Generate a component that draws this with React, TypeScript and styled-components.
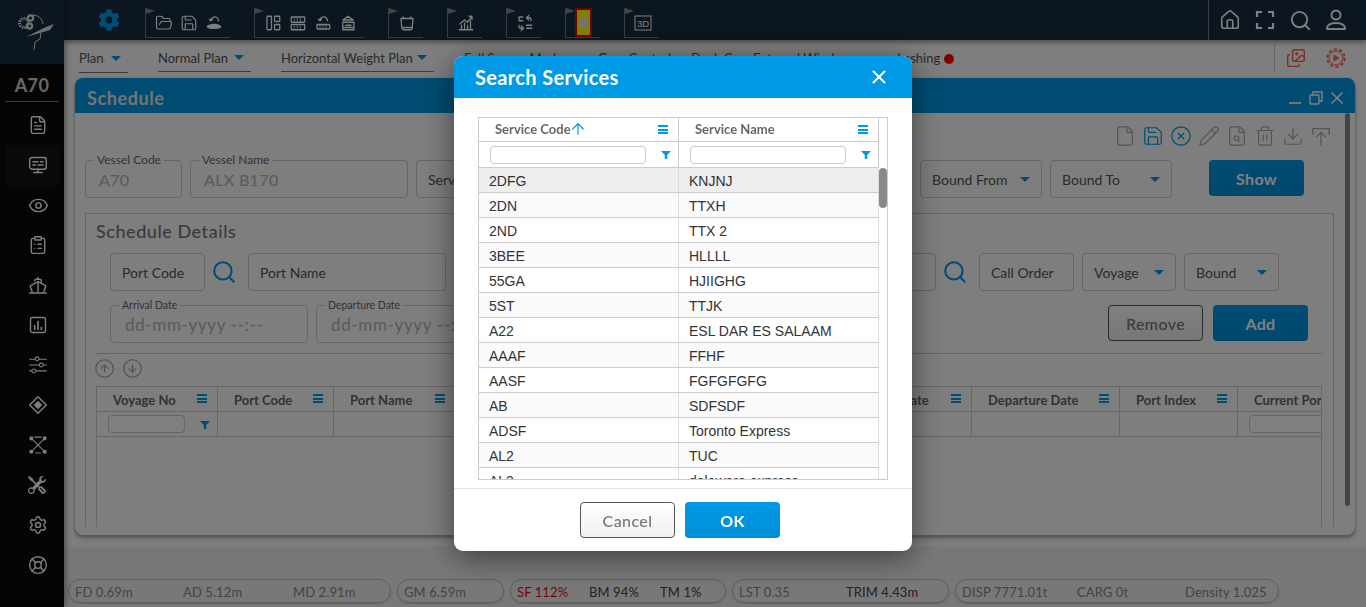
import React from 'react';
import styled, { createGlobalStyle } from 'styled-components';
import {
  FolderOpen,
  Save,
  House,
  Search,
  File,
  CircleX,
  Pencil,
  FileSearch,
  Trash2,
  Download,
  FileText,
  Eye,
  ClipboardList,
  Settings,
  LifeBuoy,
  Images,
  X,
  CircleArrowUp,
  CircleArrowDown,
  ArrowUp,
} from 'lucide-react';
import { FaCog } from 'react-icons/fa';
import { BsTools } from 'react-icons/bs';

const BLUE = '#0099e6';
const UI_FONT = '"Lato", "Noto Sans", sans-serif';

const GlobalStyle = createGlobalStyle`
  html, body {
    margin: 0;
    padding: 0;
    height: 100%;
    overflow: hidden;
    font-family: ${UI_FONT};
  }
  * { box-sizing: border-box; }
`;

const Shell = styled.div`
  display: grid;
  grid-template-columns: 64px 1fr;
  width: 1366px;
  height: 607px;
  overflow: hidden;
  background: #fcfcfc;
`;

/* ---------- sidebar ---------- */

const Sidebar = styled.aside`
  display: flex;
  flex-direction: column;
  background: #0a0a0a;
  box-shadow: 2px 0 5px rgba(0, 0, 0, 0.35);
  position: relative;
  z-index: 3;
`;

const LogoBox = styled.div`
  height: 64px;
  background: #162c42;
  display: flex;
  align-items: center;
  justify-content: center;
`;

const VesselTag = styled.div`
  height: 38px;
  margin: 0 5px;
  padding-top: 5px;
  border-bottom: 1px solid #777;
  display: flex;
  align-items: center;
  justify-content: center;
  color: #d0d0d0;
  font-size: 18px;
  font-weight: 700;
  letter-spacing: 0.4px;
`;

const NavList = styled.nav`
  display: flex;
  flex-direction: column;
  margin-top: 3px;
`;

const NavItem = styled.div<{ $active?: boolean }>`
  height: 40px;
  margin-left: 5px;
  width: 55px;
  padding-left: 23px;
  display: flex;
  align-items: center;
  color: #fff;
  background: ${p => (p.$active ? '#141414' : 'transparent')};
`;

/* ---------- top bar ---------- */

const Workspace = styled.div`
  display: flex;
  flex-direction: column;
  min-width: 0;
`;

const TopBar = styled.header`
  height: 40px;
  flex: none;
  background: #162c42;
  display: flex;
  align-items: center;
  padding-left: 34px;
  color: #fff;
  box-shadow: 0 2px 5px rgba(0, 0, 0, 0.45);
  position: relative;
  z-index: 2;
`;

const GearButton = styled.div`
  display: flex;
  color: ${BLUE};
  margin-right: 25px;
`;

const ToolGroups = styled.div`
  display: flex;
  gap: 24px;
`;

const ToolGroup = styled.div<{ $width: number }>`
  position: relative;
  width: ${p => p.$width}px;
  height: 30px;
  margin-top: 5px;
  padding: 6px 0 0 9px;
  border-left: 1px solid #777;
  border-bottom: 1px solid #777;
  display: flex;
  gap: 7px;
  &::before {
    content: '';
    position: absolute;
    top: 0;
    left: 0;
    border-left: 9px solid #888;
    border-top: 3px solid transparent;
    border-bottom: 3px solid transparent;
  }
`;

const Highlighted = styled.div`
  position: absolute;
  left: 9px;
  top: 0;
  width: 17px;
  height: 29px;
  background: #ff0;
  border: 2px solid #e00000;
  display: flex;
  align-items: center;
  justify-content: center;
  color: #e8e8e8;
`;

const TopRight = styled.div`
  margin-left: auto;
  height: 40px;
  display: flex;
  align-items: center;
  gap: 12px;
  padding: 0 18px 0 10px;
  border-left: 1px solid #777;
`;

/* ---------- sub bar ---------- */

const SubBar = styled.div`
  height: 33px;
  flex: none;
  display: flex;
  align-items: flex-start;
  padding: 8px 0 0 15px;
  gap: 30px;
  font-size: 13px;
  color: #555;
`;

const ModeDrop = styled.div<{ $width: number; $low?: boolean }>`
  width: ${p => p.$width}px;
  display: flex;
  align-items: center;
  justify-content: space-between;
  height: ${p => (p.$low ? 25 : 24)}px;
  padding: 0 7px 4px 0;
  border-bottom: 1px solid #777;
  white-space: nowrap;
`;

const Caret = styled.i`
  display: inline-block;
  flex: none;
  border-left: 5px solid transparent;
  border-right: 5px solid transparent;
  border-top: 5px solid ${BLUE};
`;

const ModeLinks = styled.div`
  display: flex;
`;

const ModeLink = styled.span<{ $width: number }>`
  width: ${p => p.$width}px;
  white-space: nowrap;
  line-height: 20px;
`;

const RedDot = styled.i`
  display: inline-block;
  width: 10px;
  height: 10px;
  margin: 0 0 -1px 4px;
  border-radius: 50%;
  background: #ff0000;
`;

const SubRight = styled.div`
  margin: -4px 0 0 auto;
  height: 28px;
  width: 92px;
  display: flex;
  align-items: center;
  gap: 19px;
  padding-left: 11px;
  border-left: 1px solid #ccc;
  color: #ff5a4a;
`;

/* ---------- schedule panel ---------- */

const Panel = styled.section`
  flex: none;
  height: 457px;
  margin: 5px 11px 12px;
  border-radius: 8px;
  background: #fcfcfc;
  box-shadow: 0 2px 0 #b5b5b5, 0 3px 4px rgba(0, 0, 0, 0.3), 0 0 2px rgba(0, 0, 0, 0.25);
  overflow: hidden;
  display: flex;
  flex-direction: column;
`;

const PanelHead = styled.div`
  height: 35px;
  flex: none;
  background: ${BLUE};
  color: #e8e8e8;
  font-size: 18px;
  font-weight: 700;
  letter-spacing: 0.6px;
  display: flex;
  align-items: center;
  padding: 4px 8px 0 12px;
`;

const WindowButtons = styled.div`
  margin-left: auto;
  display: flex;
  align-items: center;
  gap: 4px;
  color: #fff;
`;

const MinimizeBar = styled.i`
  width: 12px;
  height: 2px;
  margin: 10px 4px 0 0;
  background: #e8e8e8;
`;

const PanelBody = styled.div`
  position: relative;
  height: 414px;
  overflow: hidden;
  padding: 12px 21px 0 10px;
`;

const ScrollThumb = styled.div`
  position: absolute;
  top: 0;
  right: 5px;
  width: 5px;
  height: 393px;
  border-radius: 3px;
  background: #888;
`;

const ActionIcons = styled.div`
  height: 22px;
  display: flex;
  justify-content: flex-end;
  gap: 6px;
  padding-right: 2px;
`;

const ActionIcon = styled.span<{ $blue?: boolean }>`
  display: flex;
  color: ${p => (p.$blue ? BLUE : '#aaa')};
`;

const FieldRow = styled.div<{ $top: number; $indent?: number; $right?: number }>`
  display: flex;
  align-items: flex-start;
  gap: 8px;
  margin-top: ${p => p.$top}px;
  padding-left: ${p => p.$indent ?? 0}px;
  padding-right: ${p => p.$right ?? 0}px;
`;

const Field = styled.div<{ $width?: number; $grow?: boolean; $muted?: boolean }>`
  position: relative;
  flex: ${p => (p.$grow ? '1' : 'none')};
  width: ${p => (p.$width ? `${p.$width}px` : 'auto')};
  height: 38px;
  border: 1px solid #ccc;
  border-radius: 4px;
  padding: 0 ${p => (p.$muted ? 13 : 11)}px;
  display: flex;
  align-items: center;
  justify-content: space-between;
  white-space: nowrap;
  font-size: ${p => (p.$muted ? 16 : 14)}px;
  letter-spacing: ${p => (p.$muted ? 0.35 : 0)}px;
  color: ${p => (p.$muted ? '#b4b4b4' : '#555')};
`;

const DateValue = styled.span`
  margin-left: 1px;
  font-size: 17px;
  letter-spacing: 0.65px;
`;

const FloatLabel = styled.span<{ $small?: boolean }>`
  position: absolute;
  top: -8px;
  left: 8px;
  padding: 0 3px;
  background: #fcfcfc;
  line-height: 14px;
  font-size: ${p => (p.$small ? 10.5 : 12)}px;
  letter-spacing: 0;
  color: #666;
`;

const PrimaryButton = styled.button<{ $gap?: number }>`
  flex: none;
  width: 95px;
  height: 36px;
  margin-left: ${p => p.$gap ?? 0}px;
  border: 0;
  border-radius: 4px;
  background: linear-gradient(${BLUE}, #008fd8);
  color: #fff;
  font-family: inherit;
  font-size: 16px;
  font-weight: 700;
  letter-spacing: 0.3px;
`;

const OutlineButton = styled.button<{ $push?: boolean }>`
  flex: none;
  width: 95px;
  height: 36px;
  margin: ${p => (p.$push ? '0 2px 0 auto' : '0')};
  border: 1px solid #555;
  border-radius: 4px;
  background: linear-gradient(#fff, #f0f0f0);
  color: #777;
  font-family: inherit;
  font-size: 16px;
  font-weight: 500;
  letter-spacing: 0.4px;
`;

const Details = styled.div`
  margin-top: 15px;
  border: 1px solid #ccc;
  border-bottom: 0;
  padding: 6px 10px 0;
  height: 320px;
`;

const DetailsTitle = styled.h3`
  margin: 0;
  height: 23px;
  font-size: 18px;
  line-height: 22px;
  font-weight: 500;
  letter-spacing: 0.55px;
  color: #777;
`;

const SearchGlyph = styled.span`
  flex: none;
  width: 27px;
  margin: 0 3px 0 -3px;
  height: 38px;
  display: flex;
  align-items: center;
  justify-content: center;
  color: ${BLUE};
`;

const Divider = styled.hr`
  margin: 10px 0 0;
  border: 0;
  border-top: 1px solid #ccc;
`;

const OrderButtons = styled.div`
  display: flex;
  gap: 7px;
  height: 32px;
  padding-top: 4px;
  margin-left: -2px;
  color: #999;
`;

const DataTable = styled.div`
  width: 1226px;
  height: 141px;
  overflow: hidden;
  border: 1px solid #ccc;
  border-bottom: 0;
`;

const TableRow = styled.div`
  display: flex;
  height: 25px;
  border-bottom: 1px solid #ccc;
`;

const HeadCell = styled.div<{ $width: number }>`
  flex: none;
  position: relative;
  width: ${p => p.$width}px;
  display: flex;
  align-items: center;
  padding: 1px 0 0 16px;
  border-right: 1px solid #ccc;
  font-size: 13px;
  font-weight: 700;
  color: #666;
  white-space: nowrap;
  overflow: hidden;
`;

const MenuGlyph = styled.span`
  position: absolute;
  right: 10px;
  top: 7px;
  width: 10px;
  height: 9px;
  border-top: 2px solid ${BLUE};
  border-bottom: 2px solid ${BLUE};
  &::after {
    content: '';
    position: absolute;
    left: 0;
    right: 0;
    top: 1.5px;
    height: 2px;
    background: ${BLUE};
  }
`;

const FilterCell = styled.div<{ $width: number }>`
  flex: none;
  position: relative;
  width: ${p => p.$width}px;
  display: flex;
  align-items: center;
  padding-left: 11px;
  border-right: 1px solid #ccc;
  overflow: hidden;
`;

const FilterInput = styled.div<{ $width: number }>`
  flex: none;
  width: ${p => p.$width}px;
  height: 18px;
  background: #fff;
  border: 1px solid #ccc;
  border-radius: 4px;
`;

const Funnel = styled.span`
  position: absolute;
  right: 7px;
  top: 9px;
  width: 10px;
  height: 8px;
  background: ${BLUE};
  clip-path: polygon(0 0, 100% 0, 62% 50%, 62% 100%, 38% 100%, 38% 50%);
`;

/* ---------- status bar ---------- */

const StatusBar = styled.footer`
  flex: 1;
  background: #f0f0f0;
  display: flex;
  align-items: flex-end;
  gap: 6px;
  padding: 0 0 4px 4px;
`;

const StatPill = styled.div<{ $width: number }>`
  width: ${p => p.$width}px;
  height: 24px;
  padding: 1px 0 0 6px;
  display: flex;
  align-items: center;
  border: 1px solid #bbb;
  border-radius: 12px;
  box-shadow: 0 1px 2px rgba(0, 0, 0, 0.15);
`;

const Stat = styled.span<{ $width: number; $tone?: 'dark' | 'red' }>`
  width: ${p => p.$width}px;
  flex: none;
  font-size: 13px;
  letter-spacing: 0.1px;
  white-space: nowrap;
  color: ${p => (p.$tone === 'red' ? '#e01010' : p.$tone === 'dark' ? '#444' : '#888')};
`;

/* ---------- dialog ---------- */

const Backdrop = styled.div`
  position: fixed;
  inset: 0;
  z-index: 10;
  background: rgba(0, 0, 0, 0.5);
`;

const Dialog = styled.div`
  position: fixed;
  z-index: 11;
  top: 56px;
  left: 454px;
  width: 458px;
  height: 495px;
  background: #fff;
  border-radius: 9px;
  box-shadow: 0 6px 30px rgba(0, 0, 0, 0.5);
  overflow: hidden;
  display: flex;
  flex-direction: column;
`;

const DialogHead = styled.div`
  height: 42px;
  flex: none;
  background: ${BLUE};
  color: #fff;
  display: flex;
  align-items: center;
  justify-content: space-between;
  padding: 0 22px 0 21px;
  font-size: 20px;
  font-weight: 700;
  letter-spacing: 0.35px;
`;

const DialogBody = styled.div`
  height: 391px;
  flex: none;
  padding: 19px 24px 0;
  border-bottom: 1px solid #e5e5e5;
`;

const Grid = styled.div`
  position: relative;
  width: 410px;
  height: 363px;
  border: 1px solid #ccc;
  overflow: hidden;
`;

const GridHeadRow = styled.div<{ $height: number }>`
  display: flex;
  width: 400px;
  height: ${p => p.$height}px;
  border-bottom: 1px solid #ccc;
`;

const GridHead = styled.div`
  position: relative;
  width: 200px;
  display: flex;
  align-items: center;
  padding: 0 0 2px 16px;
  border-right: 1px solid #ccc;
  font-size: 13px;
  font-weight: 700;
  color: #666;
`;

const SortMark = styled.span`
  display: flex;
  margin-left: -2px;
  color: ${BLUE};
`;

const GridRow = styled.div<{ $tone: string }>`
  display: flex;
  width: 400px;
  height: 25px;
  border-bottom: 1px solid #ccc;
  background: ${p => p.$tone};
`;

const GridCell = styled.div`
  width: 200px;
  padding: 2px 0 0 10px;
  display: flex;
  align-items: center;
  border-right: 1px solid #ddd;
  font-family: 'Liberation Sans', Arial, sans-serif;
  font-size: 14px;
  color: #333;
  white-space: nowrap;
`;

const GridThumb = styled.div`
  position: absolute;
  right: 0;
  top: 50px;
  width: 8px;
  height: 40px;
  border-radius: 4px;
  background: #8a8a8a;
`;

const DialogFoot = styled.div`
  flex: 1;
  display: flex;
  align-items: center;
  justify-content: center;
  gap: 10px;
  padding-right: 6px;
`;

/* ---------- drawn icons ---------- */

type IconProps = { size?: number };

const Svg: React.FC<React.PropsWithChildren<IconProps>> = ({ size = 18, children }) => (
  <svg
    width={size}
    height={size}
    viewBox="0 0 24 24"
    fill="none"
    stroke="currentColor"
    strokeWidth={1.7}
    strokeLinecap="round"
    strokeLinejoin="round"
  >
    {children}
  </svg>
);

const LogoMark = () => (
  <svg width="44" height="44" viewBox="0 0 44 44" fill="none" stroke="#e0e0e0" strokeWidth="1">
    <circle cx="14" cy="13" r="4.5" strokeWidth="3" strokeDasharray="1.5 1" />
    <circle cx="20.5" cy="8" r="2.6" strokeWidth="2.2" />
    <circle cx="19.5" cy="16" r="2.6" strokeWidth="2.2" />
    <path d="M22 5c6 0 10 3 11 9M31 23l-1 6-5 3-1 8" />
    <path d="M16 27l20-10 8-3-4 6-10 3z" fill="#e0e0e0" stroke="none" />
  </svg>
);

const ShipUnload = () => (
  <Svg>
    <path d="M8 8a5 5 0 0 1 9-2l1 3M6 7l2 2 2-2" />
    <path d="M3 17c3-4 15-4 18 0-3 3-15 3-18 0z" fill="currentColor" />
  </Svg>
);

const LayoutPanels = () => (
  <Svg>
    <rect x="4" y="3" width="6" height="18" rx="1" />
    <rect x="14" y="3" width="7" height="7" rx="1" />
    <rect x="14" y="14" width="7" height="7" rx="1" />
  </Svg>
);

const StackRows = () => (
  <Svg>
    <rect x="3" y="4" width="18" height="7" rx="1" />
    <rect x="3" y="14" width="18" height="7" rx="1" />
    <path d="M7 6v3M11 6v3M15 6v3M7 16v3M11 16v3M15 16v3" strokeWidth="1" />
  </Svg>
);

const RowRestore = () => (
  <Svg>
    <path d="M8 9a5 5 0 0 1 9-3l1 3M6 7l2 2 2-2" />
    <rect x="4" y="14" width="17" height="6" rx="1" />
    <path d="M8 14v6M12 14v6M16 14v6" strokeWidth="1" />
  </Svg>
);

const CraneLoad = () => (
  <Svg>
    <path d="M12 3l-7 5h14zM5 11h15v10H5zM9 15h7M5 18h15" />
  </Svg>
);

const Bucket = () => (
  <Svg>
    <path d="M7 4l-1 2h12l-1-2M4 6h16l-1 12a3 3 0 0 1-3 3H8a3 3 0 0 1-3-3z" />
    <path d="M6 18h12" />
  </Svg>
);

const TrendBars = () => (
  <Svg>
    <path d="M3 21h18M6 21v-6M10 21v-9M14 21v-6M18 21V9M4 13l6-5 4 3 6-8M16 3h4v4" />
  </Svg>
);

const SwapRows = () => (
  <Svg>
    <path d="M4 4h5M4 4v5M4 9h5M14 5h4a2 2 0 0 1 2 2v2M17 2l-3 3 3 3" />
    <path d="M10 19H6a2 2 0 0 1-2-2v-2M7 22l3-3-3-3M14 15h7M14 19h7" />
  </Svg>
);

const CardDoc = () => (
  <svg width="10" height="12" viewBox="0 0 13 15" fill="currentColor">
    <path d="M2 1h6l4 4v8a1 1 0 0 1-1 1H2a1 1 0 0 1-1-1V2a1 1 0 0 1 1-1z" />
  </svg>
);

const Box3D = () => (
  <svg width="18" height="18" viewBox="0 0 18 18">
    <rect x="1" y="2" width="16" height="14" fill="none" stroke="currentColor" strokeWidth="1" />
    <text x="9" y="13" textAnchor="middle" fontSize="9.5" fontFamily="Liberation Sans" fill="currentColor">
      3D
    </text>
  </svg>
);

const Corners = () => (
  <Svg size={24}>
    <path d="M4 9V4h5M15 4h5v5M20 15v5h-5M9 20H4v-5" strokeWidth="2.2" strokeLinecap="butt" strokeLinejoin="miter" />
  </Svg>
);

const Person = () => (
  <Svg size={24}>
    <circle cx="12" cy="7" r="4.5" strokeWidth="2" />
    <path d="M3 21v-1c0-3 4-5 9-5s9 2 9 5v1z" strokeWidth="2" />
  </Svg>
);

const GearPlay = () => (
  <Svg size={22}>
    <circle cx="12" cy="12" r="9.5" strokeWidth="2" strokeDasharray="3.5 2.5" strokeLinecap="butt" />
    <circle cx="12" cy="12" r="7.5" strokeWidth="1" />
    <path d="M10 9l5 3-5 3z" fill="currentColor" strokeWidth="1" />
  </Svg>
);

const MonitorLines = () => (
  <Svg size={20}>
    <rect x="2" y="3" width="20" height="14" rx="3" />
    <path d="M6 8h6M15 8h3M6 12h3M12 12h6M12 17v3M7 21h10" />
  </Svg>
);

const ShipHull = () => (
  <Svg size={20}>
    <path d="M8 7c0-3 8-3 8 0v3M12 3v2M12 8v12" />
    <path d="M5 20L2.5 13 12 8l9.5 5L19 20" />
    <path d="M2 21.5h20" />
  </Svg>
);

const ChartBox = () => (
  <Svg size={20}>
    <rect x="3" y="3" width="18" height="18" rx="2" />
    <path d="M8 17v-4M12 17V8M16 17v-2" strokeWidth="2" />
  </Svg>
);

const SliderLines = () => (
  <Svg size={20}>
    <path d="M2 5h20M2 12h20M2 19h20" strokeWidth="1.3" />
    <circle cx="11" cy="4.5" r="2.3" fill="#0a0a0a" strokeWidth="1.3" />
    <circle cx="16" cy="12" r="2.3" fill="#0a0a0a" strokeWidth="1.3" />
    <circle cx="7" cy="19" r="2.3" fill="#0a0a0a" strokeWidth="1.3" />
  </Svg>
);

const DiamondDot = () => (
  <Svg size={20}>
    <path d="M12 2l10 10-10 10L2 12z" />
    <path d="M12 8l4 4-4 4-4-4z" fill="currentColor" />
  </Svg>
);

const CrossNodes = () => (
  <Svg size={20}>
    <path d="M4 4l16 16M20 4L4 20M8 2.5h8M9 21.5h6" strokeWidth="1.3" />
    <circle cx="4" cy="4" r="1.6" fill="currentColor" />
    <circle cx="20" cy="4" r="1.6" fill="currentColor" />
    <circle cx="4" cy="20" r="1.6" fill="currentColor" />
    <circle cx="20" cy="20" r="1.6" fill="currentColor" />
  </Svg>
);

const TrayUp = () => (
  <Svg size={22}>
    <path d="M3 10V4h18v6M12 22V8M7 13l5-5 5 5" strokeWidth="1.4" />
  </Svg>
);

const RestoreWin = () => (
  <svg width="14" height="14" viewBox="0 0 14 14" fill="none" stroke="currentColor" strokeWidth="1.4">
    <rect x="1" y="4" width="9" height="9" rx="1" />
    <path d="M4 4V1h9v9h-3" />
  </svg>
);

/* ---------- data ---------- */

const services = [
  ['2DFG', 'KNJNJ'],
  ['2DN', 'TTXH'],
  ['2ND', 'TTX 2'],
  ['3BEE', 'HLLLL'],
  ['55GA', 'HJIIGHG'],
  ['5ST', 'TTJK'],
  ['A22', 'ESL DAR ES SALAAM'],
  ['AAAF', 'FFHF'],
  ['AASF', 'FGFGFGFG'],
  ['AB', 'SDFSDF'],
  ['ADSF', 'Toronto Express'],
  ['AL2', 'TUC'],
  ['AL3', 'delaware express'],
];

const columns = [
  { name: 'Voyage No', width: 121 },
  { name: 'Port Code', width: 116 },
  { name: 'Port Name', width: 122 },
  { name: 'Call Order', width: 130 },
  { name: 'Voyage', width: 130 },
  { name: 'Bound', width: 127 },
  { name: 'Arrival Date', width: 129 },
  { name: 'Departure Date', width: 148 },
  { name: 'Port Index', width: 118 },
  { name: 'Current Port', width: 120 },
];

const navIcons = [
  <FileText size={20} strokeWidth={1.7} />,
  <MonitorLines />,
  <Eye size={21} strokeWidth={1.7} />,
  <ClipboardList size={20} strokeWidth={1.7} />,
  <ShipHull />,
  <ChartBox />,
  <SliderLines />,
  <DiamondDot />,
  <CrossNodes />,
  <BsTools size={18} />,
  <Settings size={20} strokeWidth={1.7} />,
  <LifeBuoy size={20} strokeWidth={1.7} />,
];

const actionIcons = [
  { icon: <File size={22} strokeWidth={1.3} /> },
  { icon: <Save size={22} strokeWidth={1.3} />, blue: true },
  { icon: <CircleX size={22} strokeWidth={1.3} />, blue: true },
  { icon: <Pencil size={22} strokeWidth={1.3} /> },
  { icon: <FileSearch size={22} strokeWidth={1.3} /> },
  { icon: <Trash2 size={22} strokeWidth={1.3} /> },
  { icon: <Download size={22} strokeWidth={1.3} /> },
  { icon: <TrayUp /> },
];

const App: React.FC = () => (
  <>
    <GlobalStyle />
    <Shell>
      <Sidebar>
        <LogoBox>
          <LogoMark />
        </LogoBox>
        <VesselTag>A70</VesselTag>
        <NavList>
          {navIcons.map((icon, i) => (
            <NavItem key={i} $active={i === 1}>
              {icon}
            </NavItem>
          ))}
        </NavList>
      </Sidebar>

      <Workspace>
        <TopBar>
          <GearButton>
            <FaCog size={22} />
          </GearButton>
          <ToolGroups>
            <ToolGroup $width={85}>
              <FolderOpen size={18} strokeWidth={1.6} />
              <Save size={18} strokeWidth={1.6} />
              <ShipUnload />
            </ToolGroup>
            <ToolGroup $width={110}>
              <LayoutPanels />
              <StackRows />
              <RowRestore />
              <CraneLoad />
            </ToolGroup>
            <ToolGroup $width={35}>
              <Bucket />
            </ToolGroup>
            <ToolGroup $width={35}>
              <TrendBars />
            </ToolGroup>
            <ToolGroup $width={35}>
              <SwapRows />
            </ToolGroup>
            <ToolGroup $width={35}>
              <Highlighted>
                <CardDoc />
              </Highlighted>
            </ToolGroup>
            <ToolGroup $width={35}>
              <Box3D />
            </ToolGroup>
          </ToolGroups>
          <TopRight>
            <House size={22} strokeWidth={1.8} />
            <Corners />
            <Search size={23} strokeWidth={2} />
            <Person />
          </TopRight>
        </TopBar>

        <SubBar>
          <ModeDrop $width={49} $low>
            Plan <Caret />
          </ModeDrop>
          <ModeDrop $width={93}>
            Normal Plan <Caret />
          </ModeDrop>
          <ModeDrop $width={153}>
            Horizontal Weight Plan <Caret />
          </ModeDrop>
          <ModeLinks>
            <ModeLink $width={134}>Full Screen Mode</ModeLink>
            <ModeLink $width={93}>Gear Control</ModeLink>
            <ModeLink $width={62}>Deck C</ModeLink>
            <ModeLink $width={144}>External Window</ModeLink>
            <ModeLink $width={70}>
              Lashing
              <RedDot />
            </ModeLink>
          </ModeLinks>
          <SubRight>
            <Images size={20} strokeWidth={1.7} />
            <GearPlay />
          </SubRight>
        </SubBar>

        <Panel>
          <PanelHead>
            Schedule
            <WindowButtons>
              <MinimizeBar />
              <RestoreWin />
              <X size={20} strokeWidth={2} />
            </WindowButtons>
          </PanelHead>
          <PanelBody>
            <ScrollThumb />
            <ActionIcons>
              {actionIcons.map((item, i) => (
                <ActionIcon key={i} $blue={item.blue}>
                  {item.icon}
                </ActionIcon>
              ))}
            </ActionIcons>

            <FieldRow $top={13} $right={30}>
              <Field $width={97} $muted>
                <FloatLabel>Vessel Code</FloatLabel>
                A70
              </Field>
              <Field $width={218} $muted>
                <FloatLabel>Vessel Name</FloatLabel>
                ALX B170
              </Field>
              <Field $grow>Service</Field>
              <Field $width={122}>
                Bound From <Caret />
              </Field>
              <Field $width={122}>
                Bound To <Caret />
              </Field>
              <PrimaryButton $gap={29}>Show</PrimaryButton>
            </FieldRow>

            <Details>
              <DetailsTitle>Schedule Details</DetailsTitle>
              <FieldRow $top={10} $indent={14} $right={44}>
                <Field $width={95}>Port Code</Field>
                <SearchGlyph>
                  <Search size={26} strokeWidth={1.9} />
                </SearchGlyph>
                <Field $width={198}>Port Name</Field>
                <Field $grow>Terminal</Field>
                <SearchGlyph>
                  <Search size={26} strokeWidth={1.9} />
                </SearchGlyph>
                <Field $width={95}>Call Order</Field>
                <Field $width={94}>
                  Voyage <Caret />
                </Field>
                <Field $width={95}>
                  Bound <Caret />
                </Field>
              </FieldRow>
              <FieldRow $top={14} $indent={14} $right={15}>
                <Field $width={198} $muted>
                  <FloatLabel $small>Arrival Date</FloatLabel>
                  <DateValue>dd-mm-yyyy --:--</DateValue>
                </Field>
                <Field $width={198} $muted>
                  <FloatLabel $small>Departure Date</FloatLabel>
                  <DateValue>dd-mm-yyyy --:--</DateValue>
                </Field>
                <OutlineButton $push>Remove</OutlineButton>
                <PrimaryButton>Add</PrimaryButton>
              </FieldRow>
              <Divider />
              <OrderButtons>
                <CircleArrowUp size={21} strokeWidth={1.2} />
                <CircleArrowDown size={21} strokeWidth={1.2} />
              </OrderButtons>
              <DataTable>
                <TableRow>
                  {columns.map(col => (
                    <HeadCell key={col.name} $width={col.width}>
                      {col.name}
                      {col.name !== 'Current Port' && <MenuGlyph />}
                    </HeadCell>
                  ))}
                </TableRow>
                <TableRow>
                  {columns.map((col, i) => (
                    <FilterCell key={col.name} $width={col.width}>
                      {(i === 0 || i === columns.length - 1) && <FilterInput $width={77} />}
                      {i === 0 && <Funnel />}
                    </FilterCell>
                  ))}
                </TableRow>
              </DataTable>
            </Details>
          </PanelBody>
        </Panel>

        <StatusBar>
          <StatPill $width={323}>
            <Stat $width={108}>FD 0.69m</Stat>
            <Stat $width={110}>AD 5.12m</Stat>
            <Stat $width={80}>MD 2.91m</Stat>
          </StatPill>
          <StatPill $width={107}>
            <Stat $width={90}>GM 6.59m</Stat>
          </StatPill>
          <StatPill $width={216}>
            <Stat $width={72} $tone="red">
              SF 112%
            </Stat>
            <Stat $width={71} $tone="dark">
              BM 94%
            </Stat>
            <Stat $width={50} $tone="dark">
              TM 1%
            </Stat>
          </StatPill>
          <StatPill $width={217}>
            <Stat $width={107}>LST 0.35</Stat>
            <Stat $width={90} $tone="dark">
              TRIM 4.43m
            </Stat>
          </StatPill>
          <StatPill $width={324}>
            <Stat $width={115}>DISP 7771.01t</Stat>
            <Stat $width={108}>CARG 0t</Stat>
            <Stat $width={90}>Density 1.025</Stat>
          </StatPill>
        </StatusBar>
      </Workspace>
    </Shell>

    <Backdrop />
    <Dialog>
      <DialogHead>
        Search Services
        <X size={22} strokeWidth={2.2} />
      </DialogHead>
      <DialogBody>
        <Grid>
          <GridThumb />
          <GridHeadRow $height={24}>
            <GridHead>
              Service Code
              <SortMark>
                <ArrowUp size={18} strokeWidth={1.6} />
              </SortMark>
              <MenuGlyph />
            </GridHead>
            <GridHead>
              Service Name
              <MenuGlyph />
            </GridHead>
          </GridHeadRow>
          <GridHeadRow $height={26}>
            <FilterCell $width={200}>
              <FilterInput $width={156} />
              <Funnel />
            </FilterCell>
            <FilterCell $width={200}>
              <FilterInput $width={156} />
              <Funnel />
            </FilterCell>
          </GridHeadRow>
          {services.map(([code, name], i) => (
            <GridRow key={code} $tone={i === 0 ? '#eee' : i % 2 ? '#fafafa' : '#fff'}>
              <GridCell>{code}</GridCell>
              <GridCell>{name}</GridCell>
            </GridRow>
          ))}
        </Grid>
      </DialogBody>
      <DialogFoot>
        <OutlineButton>Cancel</OutlineButton>
        <PrimaryButton>OK</PrimaryButton>
      </DialogFoot>
    </Dialog>
  </>
);

export default App;
